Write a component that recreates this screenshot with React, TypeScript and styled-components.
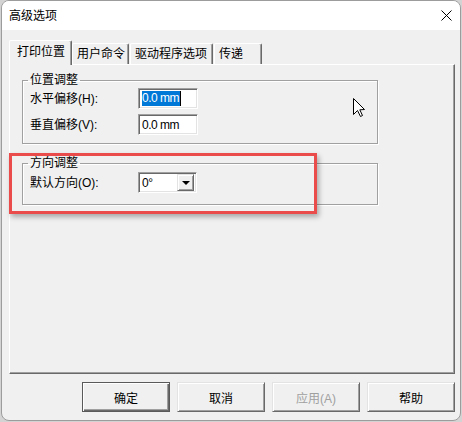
import React from "react";
import styled, { createGlobalStyle } from "styled-components";

const Global = createGlobalStyle`
  html, body { margin: 0; padding: 0; background: #d3d3d3; }
  body {
    font-family: "Liberation Sans", "Noto Sans CJK SC", sans-serif;
    font-size: 12px;
    color: #000;
  }
`;

const Window = styled.div`
  margin-left: 1px;
  width: 460px;
  height: 421px;
  box-sizing: border-box;
  border: 1px solid #9c9c9c;
  border-radius: 8px;
  overflow: hidden;
  background: #f0f0f0;
  display: flex;
  flex-direction: column;
`;

const TitleBar = styled.div`
  height: 29px;
  flex: 0 0 29px;
  background: #fff;
  display: flex;
  align-items: center;
  justify-content: space-between;
  padding: 0 8px 0 7px;
`;

const Title = styled.span`
  font-size: 12px;
  line-height: 16px;
`;

const CloseIcon = styled.svg`
  width: 11px;
  height: 11px;
  display: block;
`;

const Body = styled.div`
  flex: 1;
  display: flex;
  flex-direction: column;
  padding: 10px 5px 0 7px;
`;

const TabStrip = styled.div`
  display: flex;
  align-items: flex-end;
  height: 24px;
  position: relative;
  z-index: 2;
`;

const Tab = styled.div<{ $active?: boolean; $w: number; $gap?: number }>`
  box-sizing: border-box;
  width: ${(p) => p.$w}px;
  margin-left: ${(p) => p.$gap ?? 0}px;
  height: ${(p) => (p.$active ? 25 : 21)}px;
  margin-bottom: ${(p) => (p.$active ? -1 : 0)}px;
  padding: ${(p) => (p.$active ? "3px 0 0 7px" : "2px 0 0 4px")};
  line-height: 16px;
  background: #f0f0f0;
  border-top: 1px solid #fff;
  border-left: 1px solid #fff;
  border-right: 1px solid #696969;
  border-radius: 2px 2px 0 0;
  box-shadow: inset -1px 0 0 #a0a0a0;
  white-space: nowrap;
`;

const Panel = styled.div`
  position: relative;
  box-sizing: border-box;
  height: 310px;
  flex: 0 0 310px;
  border-top: 1px solid #fff;
  border-left: 1px solid #fff;
  border-right: 1px solid #696969;
  border-bottom: 1px solid #696969;
  box-shadow: inset -1px -1px 0 #a0a0a0;
  padding: 7px 0 0 12px;
  display: flex;
  flex-direction: column;
  gap: 11px;
`;

const Group = styled.fieldset<{ $pb: number }>`
  margin: 0;
  width: 356px;
  box-sizing: border-box;
  padding: 0 7px ${(p) => p.$pb}px 7px;
  border: 1px solid #a0a0a0;
  box-shadow: inset 1px 1px 0 #fff, 1px 1px 0 #fff;
  display: flex;
  flex-direction: column;
  gap: 5px;
`;

const Legend = styled.legend`
  padding: 0 2px;
  margin-left: -2px;
  line-height: 16px;
  font-size: 12px;
`;

const Row = styled.div<{ $mt?: number }>`
  display: flex;
  align-items: center;
  height: 21px;
  margin-top: ${(p) => p.$mt ?? 0}px;
`;

const Label = styled.span`
  width: 108px;
  line-height: 16px;
`;

const Input = styled.div`
  box-sizing: border-box;
  width: 60px;
  height: 21px;
  background: #fff;
  border-top: 1px solid #a0a0a0;
  border-left: 1px solid #a0a0a0;
  border-right: 1px solid #fff;
  border-bottom: 1px solid #fff;
  box-shadow: inset 1px 1px 0 #696969, inset -1px -1px 0 #e3e3e3;
  display: flex;
  align-items: center;
  padding-left: 3px;
  font-size: 12px;
  letter-spacing: -0.5px;
`;

const Selected = styled.span`
  background: #0078d7;
  color: #fff;
  line-height: 15px;
  padding-right: 1px;
`;

const Caret = styled.span`
  width: 1px;
  height: 15px;
  background: #000;
`;

const Combo = styled(Input)`
  width: 59px;
  justify-content: space-between;
  padding: 2px 2px 2px 3px;
`;

const DropButton = styled.div`
  box-sizing: border-box;
  width: 17px;
  height: 17px;
  background: #f0f0f0;
  border-top: 1px solid #e3e3e3;
  border-left: 1px solid #e3e3e3;
  border-right: 1px solid #696969;
  border-bottom: 1px solid #696969;
  box-shadow: inset 1px 1px 0 #fff, inset -1px -1px 0 #a0a0a0;
  display: flex;
  align-items: center;
  justify-content: center;
`;

const Arrow = styled.div`
  width: 0;
  height: 0;
  border-left: 4px solid transparent;
  border-right: 4px solid transparent;
  border-top: 4px solid #000;
`;

const Highlight = styled.div`
  position: absolute;
  left: -1px;
  top: 88px;
  width: 308px;
  height: 61px;
  box-sizing: border-box;
  border: 3px solid #ea4b4b;
  box-shadow: 2px 3px 5px rgba(0, 0, 0, 0.3);
  pointer-events: none;
`;

const Cursor = styled.svg`
  position: absolute;
  left: 343px;
  top: 33px;
  width: 13px;
  height: 20px;
`;

const ButtonRow = styled.div`
  display: flex;
  justify-content: flex-end;
  gap: 7px;
  margin-top: 8px;
`;

const Button = styled.button<{ $default?: boolean; $disabled?: boolean }>`
  box-sizing: border-box;
  width: 88px;
  height: 30px;
  font-family: "Liberation Sans", "Noto Sans CJK SC", sans-serif;
  font-size: 12px;
  background: #f0f0f0;
  color: ${(p) => (p.$disabled ? "#a0a0a0" : "#000")};
  padding: 0;
  border-style: solid;
  border-width: 1px;
  border-color: ${(p) =>
    p.$default ? "#5a5a5a" : "#e3e3e3 #696969 #696969 #e3e3e3"};
  box-shadow: ${(p) =>
    p.$default
      ? "inset 1px 1px 0 #fff, inset -1px -1px 0 #696969, inset -2px -2px 0 #a0a0a0"
      : "inset 1px 1px 0 #fff, inset -1px -1px 0 #a0a0a0"};
`;

export default function App() {
  return (
    <>
      <Global />
      <Window>
        <TitleBar>
          <Title>高级选项</Title>
          <CloseIcon viewBox="0 0 11 11">
            <path d="M0.5 0.5 L10.5 10.5 M10.5 0.5 L0.5 10.5" stroke="#000" strokeWidth="1" fill="none" />
          </CloseIcon>
        </TitleBar>
        <Body>
          <TabStrip>
            <Tab $active $w={63}>打印位置</Tab>
            <Tab $w={57}>用户命令</Tab>
            <Tab $w={83} $gap={1}>驱动程序选项</Tab>
            <Tab $w={48} $gap={1}>传递</Tab>
          </TabStrip>
          <Panel>
            <Group $pb={8}>
              <Legend>位置调整</Legend>
              <Row>
                <Label>水平偏移(H):</Label>
                <Input>
                  <Selected>0.0 mm</Selected>
                  <Caret />
                </Input>
              </Row>
              <Row>
                <Label>垂直偏移(V):</Label>
                <Input>0.0 mm</Input>
              </Row>
            </Group>
            <Group $pb={11}>
              <Legend>方向调整</Legend>
              <Row $mt={1}>
                <Label>默认方向(O):</Label>
                <Combo>
                  <span>0°</span>
                  <DropButton>
                    <Arrow />
                  </DropButton>
                </Combo>
              </Row>
            </Group>
            <Highlight />
            <Cursor viewBox="0 0 13 20">
              <path
                d="M0.5 0.5 L0.5 16.5 L4.5 12.5 L7.5 18.5 L9.5 17.5 L6.8 11.8 L11.5 11.5 Z"
                fill="#fff"
                stroke="#000"
                strokeWidth="1"
                strokeLinejoin="miter"
              />
            </Cursor>
          </Panel>
          <ButtonRow>
            <Button $default>确定</Button>
            <Button>取消</Button>
            <Button $disabled>应用(A)</Button>
            <Button>帮助</Button>
          </ButtonRow>
        </Body>
      </Window>
    </>
  );
}
